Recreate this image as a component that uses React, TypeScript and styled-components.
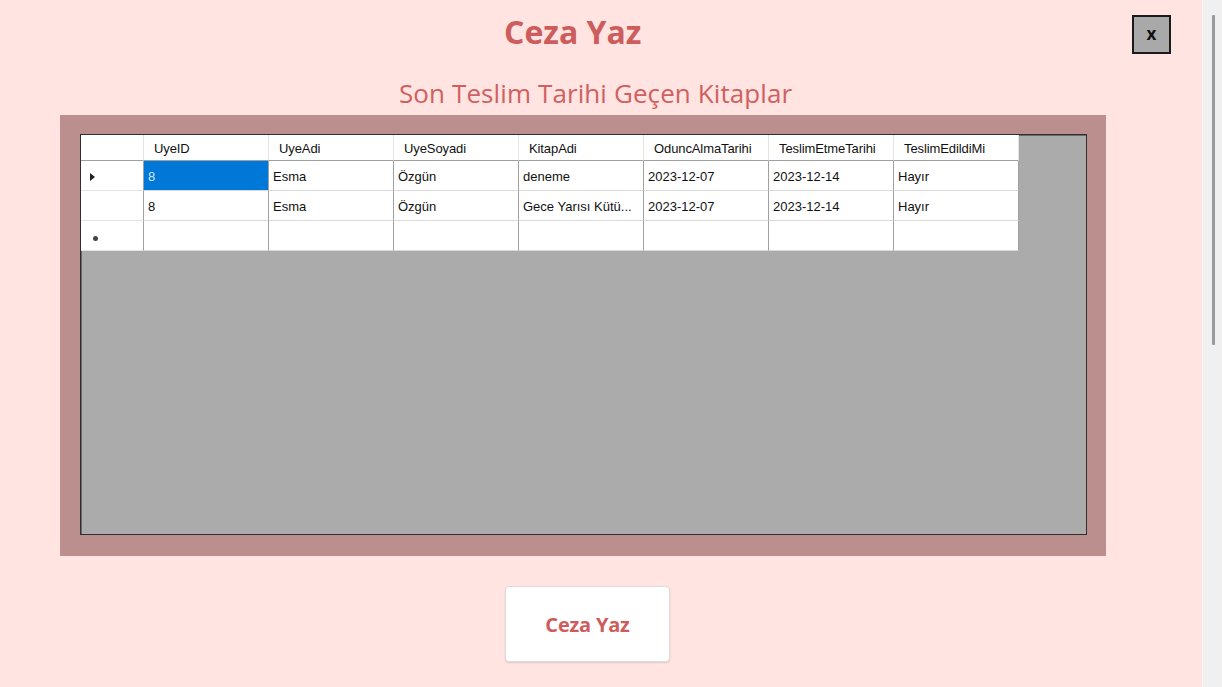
import React from "react";
import styled, { createGlobalStyle } from "styled-components";

const GlobalStyle = createGlobalStyle`
  html, body {
    margin: 0;
    padding: 0;
    background: #ffe4e1;
    overflow: hidden;
  }
  #root {
    height: 687px;
  }
`;

const Window = styled.div`
  display: flex;
  flex-direction: row;
  width: 1222px;
  height: 687px;
`;

const Main = styled.main`
  flex: 1;
  display: flex;
  flex-direction: column;
  align-items: flex-start;
  background: #ffe4e1;
  font-family: "Open Sans", "Noto Sans", sans-serif;
`;

const TitleRow = styled.header`
  align-self: stretch;
  display: flex;
  flex-direction: row;
  align-items: center;
  height: 39px;
  padding: 15px 31px 0 504px;
`;

const Title = styled.h1`
  margin: -5px 0 0;
  font-size: 32px;
  font-weight: 700;
  color: #cd5c5c;
  letter-spacing: 0;
  line-height: 40px;
`;

const CloseButton = styled.button`
  margin-left: auto;
  width: 39px;
  height: 39px;
  box-sizing: border-box;
  background: #a9a9a9;
  border: 2px solid #1a1a1a;
  font-family: "Open Sans", sans-serif;
  font-weight: 700;
  font-size: 17px;
  color: #111;
  padding: 0 0 3px;
  cursor: pointer;
`;

const SubTitle = styled.h2`
  margin: 23px 0 0 399px;
  font-size: 26px;
  font-weight: 400;
  color: #d0605f;
  line-height: 32px;
  letter-spacing: 0.1px;
`;

const Frame = styled.section`
  margin: 6px 0 0 60px;
  width: 1046px;
  height: 441px;
  box-sizing: border-box;
  padding: 19px 19px 21px 20px;
  background: #bc8f8f;
`;

const Grid = styled.div`
  width: 100%;
  height: 100%;
  box-sizing: border-box;
  background: #ababab;
  border: 1px solid #2f2f2f;
  box-shadow: inset 1px 1px 0 #6a6a6a;
`;

const Table = styled.div`
  display: grid;
  grid-template-columns: 63px repeat(7, 125px);
  grid-template-rows: 26px repeat(3, 30px);
  font-family: "Liberation Sans", Arial, sans-serif;
  font-size: 13px;
  color: #111;
`;

const HeaderCell = styled.div<{ $corner?: boolean }>`
  display: flex;
  align-items: center;
  padding: 1px 0 0 ${(p) => (p.$corner ? "0" : "10px")};
  background: #fff;
  border-right: 1px solid #e3e3e3;
  border-bottom: 1px solid #a0a0a0;
  letter-spacing: -0.1px;
  white-space: nowrap;
  overflow: hidden;
`;

const RowHeader = styled.div`
  display: flex;
  align-items: center;
  padding: 2px 0 0 9px;
  background: #fff;
  border-right: 1px solid #a0a0a0;
  border-bottom: 1px solid #e3e3e3;
`;

const Cell = styled.div<{ $selected?: boolean }>`
  display: flex;
  align-items: center;
  padding: 2px 0 0 4px;
  background: ${(p) => (p.$selected ? "#0078d7" : "#fff")};
  color: ${(p) => (p.$selected ? "#cfe6ff" : "#111")};
  border-right: 1px solid #a0a0a0;
  border-bottom: 1px solid #d9d9d9;
  white-space: nowrap;
  overflow: hidden;
`;

const Arrow = styled.span`
  width: 0;
  height: 0;
  border-top: 4px solid transparent;
  border-bottom: 4px solid transparent;
  border-left: 5px solid #222;
`;

const NewDot = styled.span`
  width: 5px;
  height: 5px;
  margin-left: 3px;
  margin-top: 4px;
  border-radius: 50%;
  background: #444;
`;

const ActionButton = styled.button`
  margin: 30px 0 0 505px;
  width: 165px;
  height: 76px;
  background: #fff;
  border: 1px solid #dcdcdc;
  border-radius: 4px;
  box-shadow: 0 1px 2px rgba(0, 0, 0, 0.12);
  font-family: "Open Sans", "Noto Sans", sans-serif;
  font-size: 20px;
  font-weight: 700;
  color: #cd5c5c;
  letter-spacing: -0.2px;
  cursor: pointer;
`;

const ScrollTrack = styled.aside`
  width: 19px;
  background: #f0f0f0;
  display: flex;
  flex-direction: column;
  align-items: center;
  padding-top: 15px;
  border-left: 1px solid #fff4f2;
`;

const ScrollThumb = styled.div`
  width: 3px;
  height: 330px;
  margin-left: 2px;
  background: #9b9b9b;
  border-radius: 1px;
`;

const columns = [
  "UyeID",
  "UyeAdi",
  "UyeSoyadi",
  "KitapAdi",
  "OduncAlmaTarihi",
  "TeslimEtmeTarihi",
  "TeslimEdildiMi",
];

const rows = [
  ["8", "Esma", "Özgün", "deneme", "2023-12-07", "2023-12-14", "Hayır"],
  ["8", "Esma", "Özgün", "Gece Yarısı Kütü...", "2023-12-07", "2023-12-14", "Hayır"],
];

export default function App() {
  return (
    <>
      <GlobalStyle />
      <Window>
        <Main>
          <TitleRow>
            <Title>Ceza Yaz</Title>
            <CloseButton>x</CloseButton>
          </TitleRow>
          <SubTitle>Son Teslim Tarihi Geçen Kitaplar</SubTitle>
          <Frame>
            <Grid>
              <Table>
                <HeaderCell $corner />
                {columns.map((c) => (
                  <HeaderCell key={c}>{c}</HeaderCell>
                ))}
                {rows.map((r, i) => (
                  <React.Fragment key={i}>
                    <RowHeader>{i === 0 && <Arrow />}</RowHeader>
                    {r.map((v, j) => (
                      <Cell key={j} $selected={i === 0 && j === 0}>
                        {v}
                      </Cell>
                    ))}
                  </React.Fragment>
                ))}
                <RowHeader>
                  <NewDot />
                </RowHeader>
                {columns.map((c) => (
                  <Cell key={"new-" + c} />
                ))}
              </Table>
            </Grid>
          </Frame>
          <ActionButton>Ceza Yaz</ActionButton>
        </Main>
        <ScrollTrack>
          <ScrollThumb />
        </ScrollTrack>
      </Window>
    </>
  );
}
